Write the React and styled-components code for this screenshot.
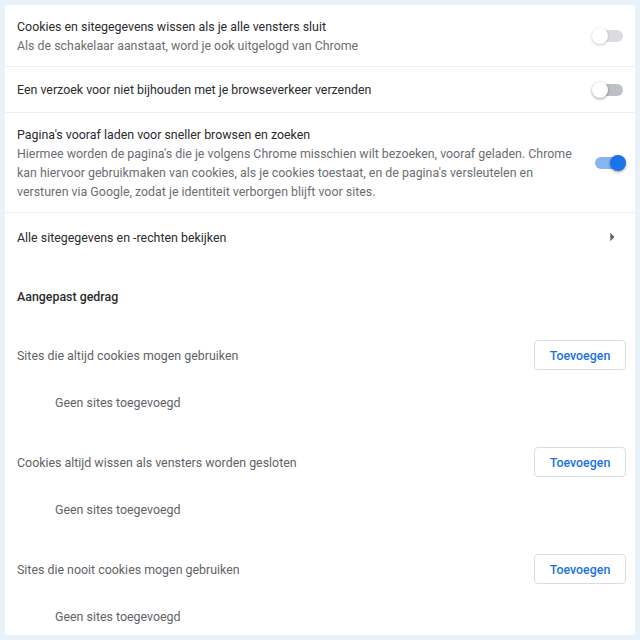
import React from 'react'
import styled, { createGlobalStyle } from 'styled-components'

const GlobalStyle = createGlobalStyle`
  html, body {
    margin: 0;
    padding: 0;
    background: #e9f1f9;
  }
  body {
    font-family: Roboto, 'Liberation Sans', Arial, sans-serif;
    font-size: 12.4px;
    color: #2b2c2f;
  }
`

const Page = styled.div`
  padding: 5px;
  height: 640px;
  box-sizing: border-box;
`

const Card = styled.div`
  background: #fff;
  height: 630px;
  overflow: hidden;
  display: flex;
  flex-direction: column;

  & > * {
    flex-shrink: 0;
  }
`

const Row = styled.div`
  display: flex;
  align-items: center;
  box-sizing: border-box;
  height: ${(p) => p.$height}px;
  padding: 0 9px 0 12px;
  border-bottom: ${(p) => (p.$divider ? '1px solid #eeeeee' : 'none')};
`

const RowText = styled.div`
  flex: 1;
  line-height: 19px;
  padding-right: 16px;
`

const Label = styled.div`
  color: #2b2c2f;
`

const Secondary = styled.div`
  color: #6b6e72;
`

const Track = styled.span`
  position: relative;
  flex-shrink: 0;
  display: inline-block;
  width: 34px;
  height: 16px;
  opacity: ${(p) => (p.$disabled ? 0.55 : 1)};

  &::before {
    content: '';
    position: absolute;
    left: 3px;
    right: 3px;
    top: 2px;
    height: 12px;
    border-radius: 6px;
    background: ${(p) => (p.$on ? '#8ab4f1' : '#bdc1c6')};
  }

  &::after {
    content: '';
    position: absolute;
    top: 0;
    left: ${(p) => (p.$on ? '18px' : '0')};
    width: 16px;
    height: 16px;
    border-radius: 50%;
    background: ${(p) => (p.$on ? '#1a73e8' : '#fff')};
    box-shadow: 0 1px 3px rgba(0, 0, 0, 0.4);
  }
`

const Arrow = styled.svg`
  flex-shrink: 0;
  width: 20px;
  height: 20px;
  margin-right: 4px;
  fill: #5f6368;
`

const SectionHeader = styled.div`
  padding: 26px 12px 0;
  line-height: 19px;
  font-weight: 500;
  color: #2b2c2f;
`

const List = styled.div`
  padding-top: 34px;
`

const ListBlock = styled.div`
  height: 107px;
`

const ListHeader = styled.div`
  display: flex;
  align-items: center;
  justify-content: space-between;
  padding: 0 9px 0 12px;
  height: 30px;
  color: #5f6368;
`

const AddButton = styled.button`
  font-family: inherit;
  font-size: 12.4px;
  font-weight: 500;
  color: #1a73e8;
  background: #fff;
  border: 1px solid #dadce0;
  border-radius: 4px;
  height: 30px;
  width: 92px;
  padding: 0;
  cursor: pointer;
`

const Empty = styled.div`
  margin-top: 23px;
  padding-left: 50px;
  line-height: 19px;
  color: #5f6368;
`

const lists = [
  'Sites die altijd cookies mogen gebruiken',
  'Cookies altijd wissen als vensters worden gesloten',
  'Sites die nooit cookies mogen gebruiken',
]

export default function App() {
  return (
    <Page>
      <GlobalStyle />
      <Card>
        <Row $height={62} $divider>
          <RowText>
            <Label>Cookies en sitegegevens wissen als je alle vensters sluit</Label>
            <Secondary>Als de schakelaar aanstaat, word je ook uitgelogd van Chrome</Secondary>
          </RowText>
          <Track $disabled />
        </Row>
        <Row $height={46} $divider>
          <RowText>
            <Label>Een verzoek voor niet bijhouden met je browseverkeer verzenden</Label>
          </RowText>
          <Track />
        </Row>
        <Row $height={100} $divider>
          <RowText>
            <Label>Pagina's vooraf laden voor sneller browsen en zoeken</Label>
            <Secondary>
              Hiermee worden de pagina's die je volgens Chrome misschien wilt bezoeken, vooraf geladen. Chrome
              kan hiervoor gebruikmaken van cookies, als je cookies toestaat, en de pagina's versleutelen en
              versturen via Google, zodat je identiteit verborgen blijft voor sites.
            </Secondary>
          </RowText>
          <Track $on />
        </Row>
        <Row $height={48}>
          <RowText>
            <Label>Alle sitegegevens en -rechten bekijken</Label>
          </RowText>
          <Arrow viewBox="0 0 24 24">
            <path d="M10 17l5-5-5-5v10z" />
          </Arrow>
        </Row>
        <SectionHeader>Aangepast gedrag</SectionHeader>
        <List>
          {lists.map((title) => (
            <ListBlock key={title}>
              <ListHeader>
                <span>{title}</span>
                <AddButton>Toevoegen</AddButton>
              </ListHeader>
              <Empty>Geen sites toegevoegd</Empty>
            </ListBlock>
          ))}
        </List>
      </Card>
    </Page>
  )
}
